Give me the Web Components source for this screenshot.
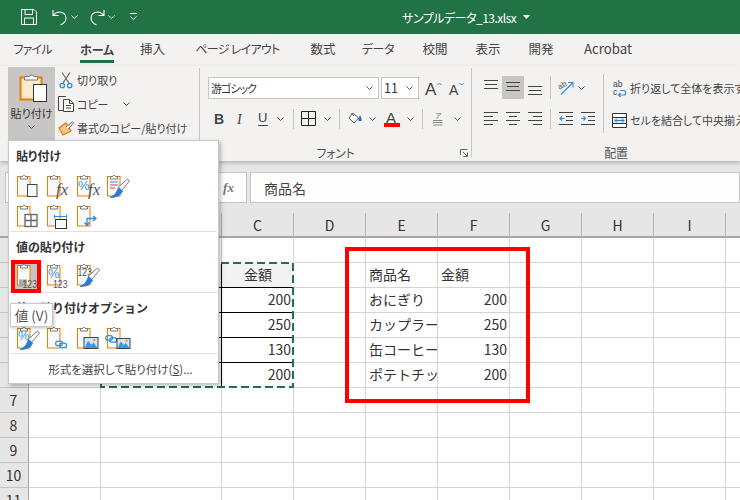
<!DOCTYPE html>
<html lang="ja"><head><meta charset="utf-8"><title>サンプルデータ_13.xlsx</title>
<style>
html,body{margin:0;padding:0;background:#fff}
body{width:740px;height:500px;overflow:hidden;position:relative;font-family:"Noto Sans CJK JP","Noto Sans",sans-serif;font-size:12px;color:#444;font-feature-settings:"palt"}
</style></head><body>
<xl-titlebar title-text="サンプルデータ_13.xlsx"></xl-titlebar>
<xl-tabs>
<xl-tab w="65" ls="-.8">ファイル</xl-tab><xl-tab w="64" active>ホーム</xl-tab><xl-tab w="47" fs="12.5">挿入</xl-tab><xl-tab w="123" ls="-.7">ページ レイアウト</xl-tab><xl-tab w="48" fs="12.5">数式</xl-tab><xl-tab w="62" ls="-.4">データ</xl-tab><xl-tab w="52" fs="12.5">校閲</xl-tab><xl-tab w="54" fs="12.5">表示</xl-tab><xl-tab w="52" fs="12.5">開発</xl-tab><xl-tab w="82" fs="13.2">Acrobat</xl-tab>
</xl-tabs>
<xl-ribbon>
  <xl-group w="199">
    <xl-cols>
      <xl-paste-button></xl-paste-button>
      <xl-stack>
        <xl-action icon="scissors" label="切り取り"></xl-action>
        <xl-action icon="copy" label="コピー" caret="1"></xl-action>
        <xl-action icon="painter" label="書式のコピー/貼り付け"></xl-action>
      </xl-stack>
    </xl-cols>
  </xl-group>
  <xl-sep h="89" mt="2"></xl-sep>
  <xl-group w="271" label="フォント" launcher="1">
    <xl-row h="23" mt="10" ml="8">
      <xl-combo w="171" value="游ゴシック" ls="-1" fs="11"></xl-combo><xl-gap w="2"></xl-gap><xl-combo w="38" value="11" fs="12.5"></xl-combo>
      <xl-icon name="grow" w="22" h="22" style="margin-left:3px"></xl-icon><xl-icon name="shrink" w="22" h="22" style="margin-left:2px"></xl-icon>
    </xl-row>
    <xl-row h="21" mt="9" ml="8">
      <xl-icon name="bold" w="22" h="20"></xl-icon><xl-icon name="italic" w="22" h="20"></xl-icon><xl-icon name="under" w="21" h="20"></xl-icon><xl-icon name="caret" w="14" h="20"></xl-icon>
      <xl-gap w="6"></xl-gap><xl-sep h="20"></xl-sep>
      <xl-icon name="borders" w="29" h="20"></xl-icon><xl-icon name="caret" w="9" h="20"></xl-icon>
      <xl-gap w="7"></xl-gap><xl-sep h="20"></xl-sep>
      <xl-gap w="2"></xl-gap><xl-icon name="bucket" w="26" h="20"></xl-icon><xl-icon name="caret" w="8" h="20"></xl-icon>
      <xl-gap w="2"></xl-gap><xl-icon name="fontcolor" w="28" h="20"></xl-icon><xl-icon name="caret" w="8" h="20"></xl-icon>
      <xl-gap w="8"></xl-gap><xl-sep h="20"></xl-sep>
      <xl-icon name="ruby" w="30" h="20"></xl-icon><xl-icon name="caret" w="8" h="20"></xl-icon>
    </xl-row>
  </xl-group>
  <xl-sep h="89" mt="2"></xl-sep>
  <xl-group w="288" label="配置">
    <xl-cols>
      <xl-stack style="width:131px;flex:none">
        <xl-row h="23" mt="10" ml="8">
          <xl-icon name="atop" w="22" h="23"></xl-icon><xl-icon name="amid" w="22" h="23" selected></xl-icon><xl-icon name="abot" w="22" h="23"></xl-icon>
          <xl-gap w="4"></xl-gap><xl-sep h="23"></xl-sep><xl-gap w="4"></xl-gap>
          <xl-icon name="orient" w="22" h="23"></xl-icon><xl-icon name="caret" w="8" h="23"></xl-icon>
        </xl-row>
        <xl-row h="21" mt="9" ml="8">
          <xl-icon name="aleft" w="22" h="20"></xl-icon><xl-icon name="acenter" w="22" h="20"></xl-icon><xl-icon name="aright" w="22" h="20"></xl-icon>
          <xl-gap w="4"></xl-gap><xl-sep h="20"></xl-sep><xl-gap w="4"></xl-gap>
          <xl-icon name="outdent" w="22" h="20"></xl-icon><xl-icon name="indent" w="22" h="20"></xl-icon>
        </xl-row>
      </xl-stack>
      <xl-sep h="59" mt="8"></xl-sep>
      <xl-stack style="flex:none;font-size:11px">
        <xl-row h="24" mt="10" ml="6"><xl-icon name="wrap" w="20" h="24"></xl-icon><span style="white-space:nowrap;font-size:11px">折り返して全体を表示する</span></xl-row>
        <xl-row h="24" mt="8" ml="5"><xl-icon name="merge" w="21" h="24"></xl-icon><span style="white-space:nowrap;font-size:11px">セルを結合して中央揃え</span></xl-row>
      </xl-stack>
    </xl-cols>
  </xl-group>
</xl-ribbon>
<xl-formula-bar value="商品名"></xl-formula-bar>
<xl-sheet></xl-sheet>
<xl-callout></xl-callout>
<xl-paste-menu>
  <xl-menu-heading>貼り付け</xl-menu-heading>
  <xl-icon-row pt="4"><xl-icon name="pPaste" w="24" h="26"></xl-icon><xl-icon name="pFx" w="24" h="26"></xl-icon><xl-icon name="pPctFx" w="24" h="26"></xl-icon><xl-icon name="pKeep" w="24" h="26"></xl-icon></xl-icon-row>
  <xl-icon-row pt="4" pb="2"><xl-icon name="pGrid" w="24" h="26"></xl-icon><xl-icon name="pWidth" w="24" h="26"></xl-icon><xl-icon name="pSwap" w="24" h="26"></xl-icon></xl-icon-row>
  <xl-divider></xl-divider>
  <xl-menu-heading>値の貼り付け</xl-menu-heading>
  <xl-icon-row pt="2" pb="4"><xl-icon name="p123" w="24" h="26" marked></xl-icon><xl-icon name="pPct123" w="24" h="26"></xl-icon><xl-icon name="p123Brush" w="24" h="26"></xl-icon></xl-icon-row>
  <xl-divider></xl-divider>
  <xl-menu-heading style="font-feature-settings:normal">他の貼り付けオプション</xl-menu-heading>
  <xl-icon-row pt="4" pb="2"><xl-icon name="pPctBrush" w="24" h="26"></xl-icon><xl-icon name="pLink" w="24" h="26"></xl-icon><xl-icon name="pPicture" w="24" h="26"></xl-icon><xl-icon name="pLinkPicture" w="24" h="26"></xl-icon></xl-icon-row>
  <xl-divider></xl-divider>
  <xl-menu-item>形式を選択して貼り付け(<u>S</u>)...</xl-menu-item>
</xl-paste-menu>
<xl-tooltip>値 (V)</xl-tooltip>
<script>
const OR='#e67e00',BL='#2f8fdc',DK='#444';
const clip=`<rect x="1.5" y="3.5" width="12.5" height="19.5" fill="#f9f9f9" stroke="${OR}"/><path d="M4.5 6V3.5H6.5A1.6 1.6 0 0 1 9.5 3.5H11.5V6Z" fill="#fff" stroke="#777"/>`;
const doc=`<rect x="11.5" y="11.5" width="9.5" height="12" fill="#fafafa" stroke="#444"/>`;
const fx=(x)=>`<text x="${x}" y="22" font-family="Liberation Serif" font-style="italic" font-size="17" fill="#555">fx</text>`;
const pct=(x,y,s=13)=>`<text x="${x}" y="${y}" font-family="Liberation Sans" font-size="${s}" fill="#3d97e0">%</text>`;
const n123=(x,y,s=10.5)=>`<text x="${x}" y="${y}" font-family="Liberation Sans" font-size="${s}" fill="#555" textLength="14.5" lengthAdjust="spacingAndGlyphs">123</text>`;
const brush=`<path d="M12.5 14L21.5 6L23.5 8L16 17" fill="#fff" stroke="#777"/><path d="M4 24.500C9 24.500 14.500 23 16.500 18L12.500 14.500C11 19 9 22.500 4 24.500Z" fill="#2b7cd3" stroke="#2b7cd3"/>`;
const chain=(x,y)=>`<g fill="none" stroke="${BL}" stroke-width="1.2" transform="translate(${x} ${y})"><rect x=".6" y=".6" width="7" height="4.6" rx="2.3"/><rect x="4.6" y="2.6" width="7" height="4.6" rx="2.3"/></g>`;
const pic=(x,y,w,h)=>`<g transform="translate(${x} ${y})"><rect x=".5" y=".5" width="${w}" height="${h}" fill="#cfe6f8" stroke="#444"/><path d="M1 ${h}L${w*.33} ${h*.35}L${w*.55} ${h*.7}L${w*.72} ${h*.5}L${w} ${h}Z" fill="#3f97dc"/><circle cx="${w*.78}" cy="${h*.28}" r="1" fill="#e67e00"/></g>`;
const vlines=(a,b,c)=>`<path d="M0 ${a+.5}H14M1 ${b+.5}H13M0 ${c+.5}H14" stroke="#444"/>`;
const ICONS={
 save:[16,16,`<path d="M.5 .5H13L15.5 3V15.5H.5Z M4 .5V5.5H11.5V.5 M3.5 15.5V9H12.5V15.5" fill="none" stroke="#fff"/>`],
 undo:[17,17,`<path d="M2 1V6.5H7.5M2.3 6.3C4 4 6 3 8.5 3C12 3 15 5.5 15 9C15 12 13 14.5 9.5 16" fill="none" stroke="#fff" stroke-width="1.1"/>`],
 redo:[17,17,`<path d="M15 1V6.5H9.5M14.7 6.3C13 4 11 3 8.5 3C5 3 2 5.5 2 9C2 12 4 14.5 7.5 16" fill="none" stroke="#fff" stroke-width="1.1"/>`],
 wcaret:[7,4,`<path d="M.5 .5L3.5 3.5L6.5 .5" fill="none" stroke="#fff"/>`],
 qat:[7,9,`<path d="M0 .5H7" stroke="#fff"/><path d="M.5 3.5L3.5 6.5L6.5 3.5" fill="none" stroke="#fff"/>`],
 tri:[7,4,`<path d="M0 0H7L3.5 4Z" fill="#fff"/>`],
 caret:[7,4,`<path d="M.5 .5L3.5 3.5L6.5 .5" fill="none" stroke="#555"/>`],
 launcher:[8,8,`<path d="M.5 6V.5H7.5M3 3L7 7M3.5 7.5H7.5V3.5" fill="none" stroke="#666"/>`],
 paste:[47,36,`<rect x="12.5" y="9.5" width="21" height="22" fill="#fde9cc" stroke="${OR}" stroke-width="2"/><path d="M16.5 12V8.5H21A3 3 0 0 1 26 8.5H29.500V12Z" fill="#fff" stroke="#777"/><rect x="25.5" y="16.500" width="13" height="17" fill="#fff" stroke="#333"/>`],
 scissors:[14,17,`<path d="M3 .5L10 11M11 .5L4 11" fill="none" stroke="#666" stroke-width="1.2"/><circle cx="3.300" cy="13.500" r="2.200" fill="none" stroke="#2f8fdc" stroke-width="1.3"/><circle cx="10.700" cy="13.500" r="2.200" fill="none" stroke="#2f8fdc" stroke-width="1.3"/>`],
 copy:[17,16,`<path d="M5.500 14.500H.5V.5H8" fill="none" stroke="#444"/><path d="M5.500 3.500H11.500L15.500 7.500V15.500H5.500Z M11.500 3.500V7.500H15.500M8 9.500H13M8 12H13" fill="#fff" stroke="#444"/>`],
 painter:[16,15,`<path d="M1 7L8 2L13 10L5 14Z" fill="#f6c58c" stroke="${OR}" stroke-width="1.3"/><path d="M8 6L14.500 .8L15.500 1.800L10 8.500" fill="#fff" stroke="#666"/>`],
 grow:[17,14,`<text x="0" y="14" font-family="Liberation Sans" font-size="17" fill="#444">A</text><path d="M12.500 4L14.500 2L16.500 4" fill="none" stroke="#2f8fdc"/>`],
 shrink:[16,14,`<text x="0" y="14" font-family="Liberation Sans" font-size="14" fill="#444">A</text><path d="M10.500 2L12.500 4L14.500 2" fill="none" stroke="#2f8fdc"/>`],
 bold:[10,14,`<text x="0" y="12" font-family="Liberation Sans" font-weight="bold" font-size="14" fill="#444">B</text>`],
 italic:[8,14,`<text x="0" y="12" font-family="Liberation Serif" font-style="italic" font-size="14" fill="#444">I</text>`],
 under:[10,15,`<text x="0" y="11" font-family="Liberation Sans" font-size="13" fill="#444">U</text><path d="M0 14.500H10" stroke="#444"/>`],
 borders:[15,15,`<path d="M.5 .5H14.500V14.500H.5ZM7.500 .5V14.500M.5 7.500H14.500" fill="none" stroke="#222"/>`],
 bucket:[14,13,`<path d="M5 1L1 6L6 11L10.500 6Z" fill="#fff" stroke="#555"/><path d="M3 1.500L6 4" stroke="#555"/><path d="M12 3L13.500 6.500V9H10.500V6.500Z" fill="#1f6fc0"/>`],
 fontcolor:[16,17,`<text x="2" y="12.500" font-family="Liberation Sans" font-size="15" fill="#444">A</text><rect y="13" width="16" height="4" fill="#f00"/>`],
 ruby:[10,15,`<text x="2" y="6.500" font-family="Noto Sans CJK JP" font-size="7" fill="#777">ア</text><path d="M0 9.500H9.500M0 11.500H9.500M0 14H9.500" stroke="#888"/>`],
 atop:[14,23,vlines(4,8,12)],
 amid:[14,23,vlines(6,10,14)],
 abot:[14,23,vlines(10,14,18)],
 aleft:[14,13,`<path d="M0 .5H14M0 4.500H9M0 8.500H14M0 12.500H9" stroke="#444"/>`],
 acenter:[14,13,`<path d="M0 .5H14M3 4.500H11M0 8.500H14M3 12.500H11" stroke="#444"/>`],
 aright:[14,13,`<path d="M0 .5H14M5 4.500H14M0 8.500H14M5 12.500H14" stroke="#444"/>`],
 orient:[16,15,`<text x="0" y="8" transform="rotate(-30 4 6)" font-family="Liberation Sans" font-size="8" fill="#555">ab</text><path d="M3 14.500L14.500 3M10 2.500H15V7.500" fill="none" stroke="#2f8fdc" stroke-width="1.1"/>`],
 outdent:[14,13,`<path d="M0 .5H14M7 4.500H14M7 8.500H14M0 12.500H14" stroke="#444"/><path d="M5.500 6.500H1M3 4.500L1 6.500L3 8.500" fill="none" stroke="#2f8fdc" stroke-width="1.2"/>`],
 indent:[14,13,`<path d="M0 .5H14M7 4.500H14M7 8.500H14M0 12.500H14" stroke="#444"/><path d="M0 6.500H4.500M2.500 4.500L4.500 6.500L2.500 8.500" fill="none" stroke="#2f8fdc" stroke-width="1.2"/>`],
 wrap:[14,16,`<text x="0" y="7" font-family="Liberation Sans" font-size="8.500" fill="#444">ab</text><text x="0" y="15" font-family="Liberation Sans" font-size="8.500" fill="#444">c</text><path d="M7 10.500H10.500A2.200 2.200 0 0 1 10.500 15H5.500M7.500 13L5.500 15L7.500 17" fill="none" stroke="#2f8fdc" stroke-width="1.2"/>`],
 merge:[15,15,`<path d="M.5 .5H14.500V14.500H.5ZM.5 4.500H14.500M.5 10.500H14.500" fill="#fff" stroke="#333"/><rect x="1" y="5" width="13" height="5" fill="#dff0fb"/><path d="M3 7.500H12M5 5.500L3 7.500L5 9.500M10 5.500L12 7.500L10 9.500" fill="none" stroke="#1f7fd0"/>`],
 pPaste:[24,26,clip+doc],
 pFx:[24,26,clip+fx(10)],
 pPctFx:[24,26,clip+pct(2,17)+fx(12)],
 pKeep:[24,26,clip+`<path d="M4 9H12" stroke="#2f8fdc"/><path d="M4 12H12M4 15H9" stroke="#e33"/>`+brush],
 pGrid:[24,26,clip+`<rect x="9" y="11.500" width="12" height="12" fill="#fafafa" stroke="#666" stroke-width="1.300"/><path d="M15 11.500V23.500M9 17.500H21" stroke="#666" stroke-width="1.300"/>`],
 pWidth:[24,26,clip+`<rect x="9.500" y="16.500" width="11" height="9" fill="#fafafa" stroke="#333"/><path d="M8 13.500H21M8.500 11.500V15.500M20.500 11.500V15.500" stroke="${BL}"/>`],
 pSwap:[24,26,clip+`<path d="M11 21.500V15.500H19.500M17 13L20 15.500L17 18M8.500 19.500L11 22.500L13.500 19.500" fill="none" stroke="${BL}" stroke-width="1.300"/>`],
 p123:[24,26,clip+`<rect x="3" y="17.500" width="8" height="7" fill="#a9a9a9"/>`+n123(6.500,25.500)],
 pPct123:[24,26,clip+pct(2,16)+n123(7,25.500)],
 p123Brush:[24,26,clip+n123(1.500,14,10)+brush],
 pPctBrush:[24,26,clip+pct(2,15)+brush],
 pLink:[24,26,clip+chain(9,15.500)],
 pPicture:[24,26,clip+pic(7.500,12,14,11)],
 pLinkPicture:[24,26,clip+chain(-1,10)+pic(10.500,13,13,10)]
};
class Base extends HTMLElement{
  connectedCallback(){ if(this.shadowRoot) return; this.attachShadow({mode:'open'}).innerHTML=this.html(); }
  num(a,d=0){const v=this.getAttribute(a);return v===null?d:+v;}
}
const def=(n,fn)=>customElements.define(n,class extends Base{html(){return fn(this)}});
def('xl-icon',el=>{const [w,h,s]=ICONS[el.getAttribute('name')];
  const W=el.num('w',w),H=el.num('h',h);
  const marked=el.hasAttribute('marked'),sel=el.hasAttribute('selected');
  return `<style>:host{display:inline-flex;flex:none;align-items:center;justify-content:center;width:${W}px;height:${H}px;position:relative;z-index:0;${sel?'background:#c8c6c4;':''}}
  svg{display:block;overflow:visible}
  ${marked?':host::before{content:"";position:absolute;left:-5px;top:-2px;width:30px;height:33px;box-sizing:border-box;border:4px solid #f00;background:#c8c6c4;z-index:-1}':''}</style>
  <svg width="${w}" height="${h}" viewBox="0 0 ${w} ${h}">${s}</svg>`});
def('xl-titlebar',el=>`<style>:host{display:flex;align-items:center;height:34px;background:#217346;color:#fff;font-size:12px;box-sizing:border-box;padding-left:21px}
  .t{margin-left:265px;white-space:nowrap;letter-spacing:-.5px}</style>
  <xl-icon name="save"></xl-icon><xl-icon name="undo" style="margin-left:14px"></xl-icon><xl-icon name="wcaret" style="margin-left:3px"></xl-icon>
  <xl-icon name="redo" style="margin-left:11px"></xl-icon><xl-icon name="wcaret" style="margin-left:2px"></xl-icon><xl-icon name="qat" style="margin-left:15px"></xl-icon>
  <span class="t">${el.getAttribute('title-text')}</span><xl-icon name="tri" style="margin-left:7px"></xl-icon>`);
def('xl-tabs',()=>`<style>:host{display:flex;height:32px;background:#f3f2f1}</style><slot></slot>`);
def('xl-tab',el=>{const a=el.hasAttribute('active');return `<style>:host{display:flex;flex:none;width:${el.num('w')}px;height:32px;align-items:center;justify-content:center;font-size:${el.num('fs',12)}px;letter-spacing:${el.num('ls')}px;color:#444;white-space:nowrap;box-sizing:border-box;padding-bottom:2px;${a?'font-weight:bold;':''}}
  span{position:relative;display:block;line-height:22px}
  ${a?'span::after{content:"";display:block;height:3px;background:#217346;margin-top:-1px}':''}
  ${a?':host{padding-top:3px}':''}</style><span><slot></slot></span>`});
def('xl-ribbon',()=>`<style>:host{display:flex;height:95px;background:#f3f2f1;position:relative;z-index:1;box-shadow:0 2px 4px rgba(0,0,0,.22);overflow:hidden}</style><slot></slot>`);
def('xl-group',el=>`<style>:host{display:flex;flex:none;flex-direction:column;width:${el.num('w')}px;height:95px}
  .b{flex:1;min-height:0;display:flex;flex-direction:column}
  .l{height:16px;flex:none;display:flex;align-items:center;justify-content:center;font-size:12px;color:#555;position:relative;line-height:16px;letter-spacing:-.3px}
  .l xl-icon{position:absolute;right:3px;top:4px}</style>
  <div class="b"><slot></slot></div>
  <div class="l">${el.getAttribute('label')||''}${el.hasAttribute('launcher')?'<xl-icon name="launcher"></xl-icon>':''}</div>`);
def('xl-sep',el=>`<style>:host{display:block;flex:none;width:1px;height:${el.num('h')}px;margin-top:${el.num('mt')}px;background:#c8c6c4}</style>`);
def('xl-gap',el=>`<style>:host{display:block;flex:none;width:${el.num('w')}px}</style>`);
def('xl-cols',()=>`<style>:host{display:flex;align-items:flex-start;height:79px}</style><slot></slot>`);
def('xl-stack',()=>`<style>:host{display:flex;flex-direction:column}</style><slot></slot>`);
def('xl-row',el=>`<style>:host{display:flex;align-items:center;flex:none;height:${el.num('h')}px;margin-top:${el.num('mt')}px;margin-left:${el.num('ml')}px}</style><slot></slot>`);
def('xl-paste-button',()=>`<style>:host{display:flex;flex:none;flex-direction:column;align-items:center;width:47px;height:74px;margin:1px 0 0 8px;background:#c8c6c4;font-size:11px;color:#333}
  .t{line-height:16px;margin-top:1px;white-space:nowrap}
  xl-icon{margin-top:1px}</style>
  <xl-icon name="paste"></xl-icon><span class="t">貼り付け</span><xl-icon name="caret" style="margin-top:4px"></xl-icon>`);
def('xl-action',el=>`<style>:host{display:flex;align-items:center;height:24px;white-space:nowrap;font-size:11px;color:#444}
  :host(:first-child){margin-top:2px}</style>
  <xl-icon name="${el.getAttribute('icon')}" w="22" h="24"></xl-icon><span>${el.getAttribute('label')}</span>${el.hasAttribute('caret')?'<xl-icon name="caret" style="margin-left:14px"></xl-icon>':''}`);
def('xl-combo',el=>`<style>:host{display:flex;flex:none;align-items:center;justify-content:space-between;box-sizing:border-box;width:${el.num('w')}px;height:22px;background:#fff;border:1px solid #c6c6c6;padding:0 5px 0 2px;font-size:${el.num('fs',12)}px;letter-spacing:${el.num('ls')}px;color:#333;white-space:nowrap}</style>
  <span>${el.getAttribute('value')}</span><xl-icon name="caret"></xl-icon>`);
def('xl-formula-bar',el=>`<style>:host{display:flex;height:52px;box-sizing:border-box;padding-top:11px;background:#e6e6e6;align-items:flex-start}
  div{box-sizing:border-box;height:31px;border:1px solid #c6c6c6;background:#fdfdfd;display:flex;align-items:center}
  .n{width:190px;margin-left:5px}
  .f{width:37px;margin-left:15px;justify-content:center;font:italic bold 13px "Liberation Serif",serif;color:#777}
  .v{flex:1;margin-left:3px;padding-left:13px;font-size:14px;color:#444}</style>
  <div class="n"></div><div class="f">fx</div><div class="v">${el.getAttribute('value')}</div>`);
def('xl-sheet',()=>{
  const data={
    '2C':['金額','mid'],'3C':['200','r'],'4C':['250','r'],'5C':['130','r'],'6C':['200','r'],
    '2E':['商品名','l'],'3E':['おにぎり','l'],'4E':['カップラーメン','l'],'5E':['缶コーヒー','l'],'6E':['ポテトチップス','l'],
    '2F':['金額','l'],'3F':['200','r'],'4F':['250','r'],'5F':['130','r'],'6F':['200','r']};
  const letters=['A','B','C','D','E','F','G','H','I','J'];
  const at=(r,c)=>`style="grid-area:${r}/${c}"`;
  let h=`<div class="h corner" ${at(1,1)}></div>`;
  letters.forEach((l,i)=>{h+=`<div class="h col" ${at(1,i+2)}>${'CDEFGHI'.includes(l)?l:''}</div>`});
  for(let r=1;r<=11;r++){
    h+=`<div class="h rowh" ${at(r+1,1)}>${r>=7?r:''}</div>`;
    letters.forEach((l,i)=>{const d=data[r+l];
      const inT=r>=2&&r<=6&&(l==='B'||l==='C');
      let cl='c'+(inT?' tb':'')+(inT&&r===2?' th':'')+(d?' '+d[1]:'');
      h+=`<div class="${cl}" ${at(r+1,i+2)}>${d?`<span>${d[0]}</span>`:''}</div>`;});
  }
  return `<style>:host{display:grid;grid-template-columns:29px 72px 121px repeat(8,72px);grid-template-rows:25px repeat(11,25px);height:287px;overflow:hidden;font-size:14px;color:#333;background:#fff;position:relative;font-feature-settings:normal}
  .h{background:#e6e6e6;display:flex;align-items:center;justify-content:center;box-sizing:border-box}
  .col{border-bottom:2px solid #a6a6a6;border-right:1px solid #b4b4b4}
  .corner{border-bottom:2px solid #a6a6a6;border-right:1px solid #a6a6a6}
  .rowh{border-right:1px solid #a6a6a6;border-bottom:1px solid #c4c4c4;padding-right:1px}
  .c{box-sizing:border-box;border-right:1px solid #d4d4d4;border-bottom:1px solid #d4d4d4;display:flex;align-items:center;overflow:hidden;white-space:nowrap;padding:0 2px 2px 3px;min-width:0}
  .l{justify-content:flex-start}.r{justify-content:flex-end}.mid{justify-content:center}
  .tb{border-right-color:#000;border-bottom-color:#000}
  .th{background:#f2f2f2}
  xl-ants{grid-column:3/5;grid-row:3/8}</style>${h}<xl-ants></xl-ants>`});
def('xl-ants',()=>`<style>:host{display:block;margin:-1px 0 0 -1px;z-index:2;pointer-events:none;position:relative}svg{display:block;overflow:visible}</style>
  <svg width="194" height="126"><rect x="1" y="1" width="192" height="124" fill="none" stroke="#fff" stroke-width="2"/><rect x="1" y="1" width="192" height="124" fill="none" stroke="#217346" stroke-width="2" stroke-dasharray="8 4"/></svg>`);
def('xl-callout',()=>`<style>:host{position:absolute;left:345px;top:247px;width:185px;height:156px;box-sizing:border-box;border:4px solid #f00;z-index:3}</style>`);
def('xl-paste-menu',()=>`<style>:host{position:absolute;left:8px;top:140px;width:211px;height:244px;box-sizing:border-box;background:#fff;border:1px solid #c8c8c8;box-shadow:2px 2px 4px rgba(0,0,0,.25);z-index:4;display:flex;flex-direction:column}</style><slot></slot>`);
def('xl-menu-heading',()=>`<style>:host{display:flex;align-items:center;height:28px;padding-left:7px;font-size:12px;font-weight:bold;color:#333;white-space:nowrap;flex:none}</style><slot></slot>`);
def('xl-icon-row',el=>`<style>:host{display:flex;gap:6px;padding:${el.num('pt')}px 0 ${el.num('pb')}px 7px;flex:none}</style><slot></slot>`);
def('xl-divider',()=>`<style>:host{display:block;height:1px;background:#e1e1e1;margin:0 1px;flex:none}</style>`);
def('xl-menu-item',()=>`<style>:host{display:flex;align-items:center;justify-content:center;flex:1;font-size:11.5px;color:#444;white-space:nowrap;padding-left:14px}</style><slot></slot>`);
def('xl-tooltip',()=>`<style>:host{position:absolute;left:10px;top:303px;width:43px;height:24px;box-sizing:border-box;background:#fff;border:1px solid #c8c8c8;box-shadow:1px 1px 3px rgba(0,0,0,.25);z-index:5;display:flex;align-items:center;justify-content:center;font-size:13.5px;color:#555;white-space:nowrap}</style><slot></slot>`);
</script>
</body></html>
